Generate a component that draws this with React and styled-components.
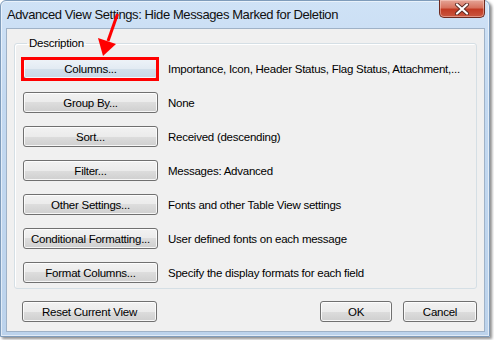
import React from "react";
import styled, { createGlobalStyle } from "styled-components";

const Global = createGlobalStyle`
  html, body { margin: 0; padding: 0; background: #ffffff; }
  body { font-family: "Liberation Sans", Arial, sans-serif; }
`;

const Stage = styled.div`
  position: relative;
  width: 494px;
  height: 340px;
`;

const Window = styled.div`
  width: 490px;
  height: 337px;
  box-sizing: border-box;
  display: flex;
  flex-direction: column;
  border: 1px solid #7f9cbb;
  border-radius: 6px 6px 0 0;
  background: linear-gradient(180deg, #cfe2f6 0%, #c3d9f1 30%, #bcd3ec 100%);
  box-shadow: 2px 2px 3px rgba(0, 0, 0, 0.45), inset 0 0 0 1px rgba(255, 255, 255, 0.55);
`;

const TitleBar = styled.div`
  height: 27px;
  flex: none;
  display: flex;
  justify-content: space-between;
  align-items: flex-start;
  padding-left: 6px;
  padding-right: 4px;
`;

const Title = styled.div`
  font-family: "Liberation Sans", Arial, sans-serif;
  font-size: 13px;
  letter-spacing: -0.4px;
  line-height: 14px;
  padding-top: 7px;
  color: #101010;
  white-space: nowrap;
`;

const CloseButton = styled.div`
  width: 46px;
  height: 18px;
  margin-top: -1px;
  box-sizing: border-box;
  border: 1px solid #6e2a20;
  border-top: none;
  border-radius: 0 0 5px 5px;
  background: linear-gradient(180deg, #e5a597 0%, #d7735f 45%, #c23b24 55%, #c9563f 100%);
  box-shadow: inset 0 0 0 1px rgba(255, 220, 210, 0.45);
  display: flex;
  align-items: center;
  justify-content: center;
`;

const Client = styled.div`
  flex: 1;
  margin: 0 4px 4px 5px;
  border: 1px solid #9fb2c7;
  background: #f0f0f0;
  padding: 7px 7px 8px 7px;
  display: flex;
  flex-direction: column;
  font-family: "Liberation Sans", Arial, sans-serif;
  font-size: 11.5px;
  letter-spacing: -0.25px;
  color: #000;
`;

const Group = styled.fieldset`
  margin: 0;
  border: 1px solid #d5dfe5;
  border-radius: 3px;
  padding: 8px 8px 5px 8px;
  display: flex;
  flex-direction: column;
  gap: 13px;
  box-shadow: 1px 1px 0 #ffffff inset;
`;

const Legend = styled.legend`
  padding: 0 2px;
  margin-left: 4px;
  line-height: 14px;
  font-size: 11.5px;
`;

const Row = styled.div`
  display: flex;
  align-items: center;
  gap: 10px;
`;

const Button = styled.div`
  position: relative;
  width: ${(p) => p.$w || 135}px;
  height: 21px;
  box-sizing: border-box;
  border: 1px solid #707070;
  border-radius: 3px;
  display: flex;
  align-items: center;
  justify-content: center;
  white-space: nowrap;
  background: ${(p) =>
    p.$hot
      ? "linear-gradient(180deg, #eef3f8 0%, #e3ebf3 50%, #d3e0eb 50%, #c8d8e6 100%)"
      : "linear-gradient(180deg, #f2f2f2 0%, #ebebeb 50%, #dddddd 50%, #cfcfcf 100%)"};
  box-shadow: inset 0 0 0 1px rgba(255, 255, 255, 0.8);
`;

const Highlight = styled.div`
  position: absolute;
  left: -3px;
  top: -2px;
  right: -2px;
  bottom: -3px;
  border: 3px solid #ff0000;
  pointer-events: none;
`;

const Desc = styled.span`
  white-space: nowrap;
`;

const Footer = styled.div`
  margin-top: 12px;
  padding: 0 0 0 8px;
  display: flex;
  align-items: center;
  gap: 11px;
`;

const Spacer = styled.div`
  flex: 1;
`;

const Arrow = styled.svg`
  position: absolute;
  left: 0;
  top: 0;
  pointer-events: none;
`;

const rows = [
  ["Columns...", "Importance, Icon, Header Status, Flag Status, Attachment,...", true],
  ["Group By...", "None"],
  ["Sort...", "Received (descending)"],
  ["Filter...", "Messages: Advanced"],
  ["Other Settings...", "Fonts and other Table View settings"],
  ["Conditional Formatting...", "User defined fonts on each message"],
  ["Format Columns...", "Specify the display formats for each field"],
];

export default function App() {
  return (
    <Stage>
      <Global />
      <Window>
        <TitleBar>
          <Title>Advanced View Settings: Hide Messages Marked for Deletion</Title>
          <CloseButton>
            <svg width="16" height="12" viewBox="0 0 16 12">
              <path d="M3 1.5 L13 10.5 M13 1.5 L3 10.5" stroke="#5a2a24" strokeWidth="4" strokeLinecap="round" />
              <path d="M3 1.5 L13 10.5 M13 1.5 L3 10.5" stroke="#ffffff" strokeWidth="2.2" strokeLinecap="round" />
            </svg>
          </CloseButton>
        </TitleBar>
        <Client>
          <Group>
            <Legend>Description</Legend>
            {rows.map(([label, desc, hot]) => (
              <Row key={label}>
                <Button $hot={hot}>
                  {label}
                  {hot && <Highlight />}
                </Button>
                <Desc>{desc}</Desc>
              </Row>
            ))}
          </Group>
          <Footer>
            <Button>Reset Current View</Button>
            <Spacer />
            <Button $w={72}>OK</Button>
            <Button $w={74}>Cancel</Button>
          </Footer>
        </Client>
      </Window>
      <Arrow width="494" height="340" viewBox="0 0 494 340">
        <line x1="117.5" y1="14" x2="108" y2="41" stroke="#ff0000" strokeWidth="3" />
        <polygon points="98,38 116,44 103,56" fill="#ff0000" />
      </Arrow>
    </Stage>
  );
}
